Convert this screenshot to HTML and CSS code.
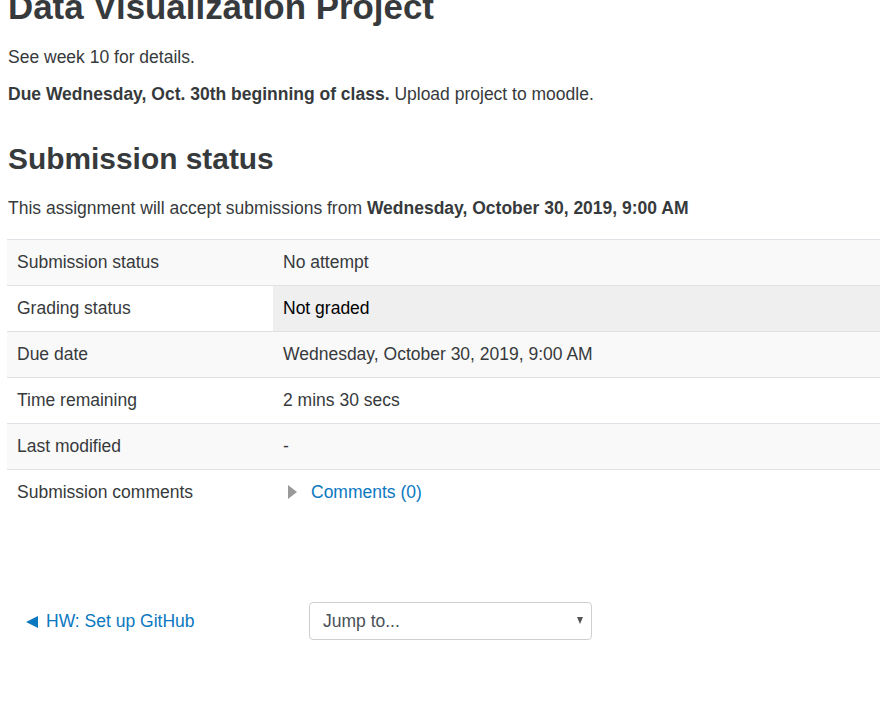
FILE: index.html
```html
<!DOCTYPE html>
<html lang="en">
<head>
<meta charset="utf-8">
<title>Data Visualization Project</title>
<link rel="stylesheet" href="styles.css">
</head>
<body>
<div class="page">
  <h2 class="title">Data Visualization Project</h2>
  <p>See week 10 for details.</p>
  <p><strong>Due Wednesday, Oct. 30th beginning of class.</strong> Upload project to moodle.</p>

  <h3 class="section">Submission status</h3>
  <p class="accept">This assignment will accept submissions from <strong>Wednesday, October 30, 2019, 9:00 AM</strong></p>

  <table class="status">
    <tr class="odd"><td class="label">Submission status</td><td class="value">No attempt</td></tr>
    <tr class="even"><td class="label">Grading status</td><td class="value hl">Not graded</td></tr>
    <tr class="odd"><td class="label">Due date</td><td class="value">Wednesday, October 30, 2019, 9:00 AM</td></tr>
    <tr class="even"><td class="label">Time remaining</td><td class="value">2 mins 30 secs</td></tr>
    <tr class="odd"><td class="label">Last modified</td><td class="value">-</td></tr>
    <tr class="even"><td class="label">Submission comments</td><td class="value"><span class="caret"></span><a href="#" class="link">Comments (0)</a></td></tr>
  </table>

  <div class="nav">
    <a href="#" class="link prev"><span class="tri"></span>HW: Set up GitHub</a>
    <div class="select"><span>Jump to...</span><span class="arrow"></span></div>
  </div>
</div>
</body>
</html>
```

FILE: styles.css
```css
html, body {
  margin: 0;
  padding: 0;
  background: #fff;
  overflow: hidden;
}
body {
  font-family: "Liberation Sans", Arial, sans-serif;
  font-size: 17.5px;
  line-height: 26px;
  color: #373a3c;
}
.page {
  padding-left: 7px;
}
p {
  margin: 0 0 11px 1px;
}
strong {
  font-weight: bold;
}
.title {
  font-size: 34.9px;
  line-height: 1.2;
  font-weight: bold;
  margin: -14px 0 16px 1px;
}
.section {
  font-size: 29.9px;
  line-height: 1.2;
  font-weight: bold;
  margin: 34px 0 18px 1px;
}
.accept {
  margin-bottom: 18px;
}
.status {
  border-collapse: collapse;
  width: 873px;
}
.status td {
  border-top: 1px solid #dee2e6;
  padding: 10px 10px;
  height: 25px;
  line-height: 25px;
  vertical-align: top;
}
.status .label {
  width: 246px;
}
.odd td {
  background: #f9f9f9;
}
.even td {
  background: #fff;
}
.even td.hl {
  background: #efefef;
  color: #000;
}
.caret {
  display: inline-block;
  width: 0;
  height: 0;
  border-top: 7px solid transparent;
  border-bottom: 7px solid transparent;
  border-left: 9px solid #999;
  margin: 0 14px 0 5px;
  vertical-align: -1px;
}
.link {
  color: #0b78bf;
  text-decoration: none;
}
.nav {
  display: flex;
  align-items: center;
  margin-top: 87px;
  padding-left: 19px;
}
.prev {
  width: 283px;
}
.tri {
  display: inline-block;
  width: 0;
  height: 0;
  border-top: 6px solid transparent;
  border-bottom: 6px solid transparent;
  border-right: 12px solid #0b78bf;
  margin-right: 8px;
  vertical-align: -1px;
}
.select {
  box-sizing: border-box;
  width: 283px;
  height: 38px;
  border: 1px solid #cfcfcf;
  border-radius: 4px;
  display: flex;
  align-items: center;
  justify-content: space-between;
  padding: 0 8px 0 13px;
  color: #495057;
}
.arrow {
  width: 0;
  height: 0;
  border-left: 3px solid transparent;
  border-right: 3px solid transparent;
  border-top: 7px solid #555;
}
```
